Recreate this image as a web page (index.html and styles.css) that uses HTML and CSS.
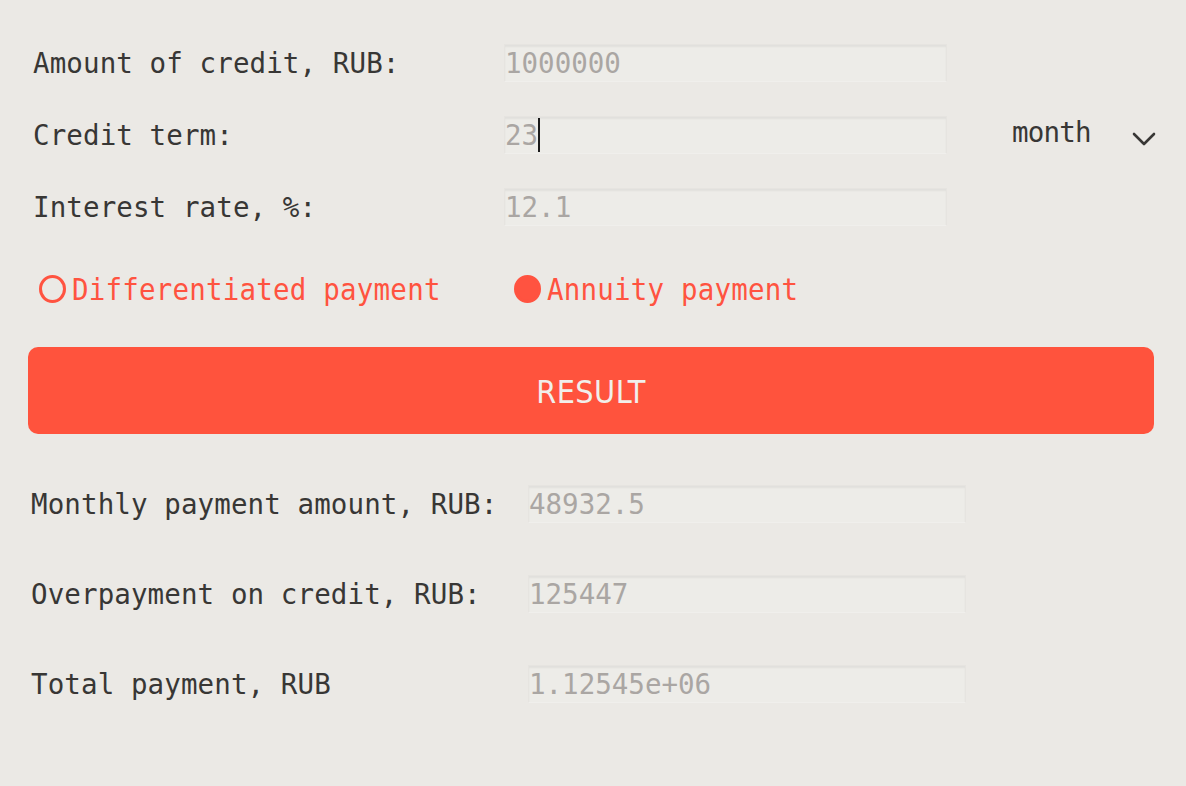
FILE: index.html
```html
<!DOCTYPE html>
<html lang="en">
<head>
<meta charset="utf-8">
<title>Credit calculator</title>
<link rel="stylesheet" href="styles.css">
</head>
<body>
<main class="page">
  <section class="form">
    <div class="row">
      <div class="label">Amount of credit, RUB:</div>
      <div class="field">1000000</div>
    </div>
    <div class="row">
      <div class="label">Credit term:</div>
      <div class="field">23<span class="caret"></span></div>
      <div class="select">
        <span class="select-text">month</span>
        <svg class="chevron" width="24" height="14" viewBox="0 0 24 14"><polyline points="2,2 12,12 22,2" fill="none" stroke="#383735" stroke-width="2.6" stroke-linecap="round" stroke-linejoin="round"/></svg>
      </div>
    </div>
    <div class="row">
      <div class="label">Interest rate, %:</div>
      <div class="field">12.1</div>
    </div>
  </section>

  <section class="radios">
    <div class="radio">
      <span class="dot"></span>
      <span class="radio-text">Differentiated payment</span>
    </div>
    <div class="radio checked">
      <span class="dot"></span>
      <span class="radio-text">Annuity payment</span>
    </div>
  </section>

  <button class="result-btn">RESULT</button>

  <section class="results">
    <div class="row res-row">
      <div class="label">Monthly payment amount, RUB:</div>
      <div class="field">48932.5</div>
    </div>
    <div class="row res-row">
      <div class="label">Overpayment on credit, RUB:</div>
      <div class="field">125447</div>
    </div>
    <div class="row res-row">
      <div class="label">Total payment, RUB</div>
      <div class="field">1.12545e+06</div>
    </div>
  </section>
</main>
</body>
</html>
```
FILE: styles.css
```css
* { box-sizing: border-box; }

html, body {
  margin: 0;
  padding: 0;
  background: #ebe9e5;
}

body {
  width: 1186px;
  height: 786px;
  overflow: hidden;
  font-family: "DejaVu Sans Mono", "Liberation Mono", monospace;
  font-size: 27.5px;
  color: #383735;
}

.page {
  padding: 44px 32px 0 28px;
  display: flex;
  flex-direction: column;
}

.form {
  display: flex;
  flex-direction: column;
  gap: 34px;
  padding-left: 5px;
}

.row {
  display: flex;
  align-items: center;
  height: 38px;
}

.label {
  width: 471px;
  flex: none;
  white-space: nowrap;
  letter-spacing: 0.1px;
}

.field {
  width: 443px;
  height: 38px;
  flex: none;
  display: flex;
  align-items: center;
  padding-left: 0;
  background: #edece8;
  border: 1px solid #e6e4e0;
  border-bottom-color: #f0efec;
  box-shadow: inset 0 2px 2px rgba(0, 0, 0, 0.05);
  color: #aaa6a3;
  white-space: nowrap;
}

.caret {
  display: inline-block;
  width: 2px;
  height: 34px;
  background: #1a1a1a;
  margin-left: 0;
}

.select {
  display: flex;
  align-items: center;
  margin-left: 65px;
  flex: 1;
  height: 38px;
}

.select-text {
  position: relative;
  top: -3px;
  letter-spacing: -0.8px;
}

.chevron {
  margin-left: 41px;
  margin-top: 8px;
}

.radios {
  display: flex;
  align-items: center;
  height: 30px;
  margin-top: 48px;
  padding-left: 11px;
  color: #ff5340;
}

.radio {
  display: flex;
  align-items: center;
  gap: 6px;
  width: 475px;
  flex: none;
}

.radio-text {
  display: inline-block;
  transform: scaleY(1.12);
  letter-spacing: 0.2px;
}

.dot {
  width: 27px;
  height: 28px;
  border-radius: 50%;
  border: 3.2px solid #ff5340;
  flex: none;
}

.checked .dot {
  background: #ff5340;
}

.result-btn {
  margin-top: 43px;
  height: 87px;
  width: 1126px;
  border: none;
  border-radius: 10px;
  background: #ff533d;
  color: #f1efeb;
  font-family: "DejaVu Sans Condensed", "DejaVu Sans", sans-serif;
  font-stretch: condensed;
  font-size: 32px;
  letter-spacing: 0.5px;
  padding: 0;
  padding-top: 2px;
}

.results {
  display: flex;
  flex-direction: column;
  gap: 52px;
  margin-top: 51px;
  padding-left: 3px;
}

.res-row .label {
  width: 497px;
}

.res-row .field {
  width: 438px;
}
```
